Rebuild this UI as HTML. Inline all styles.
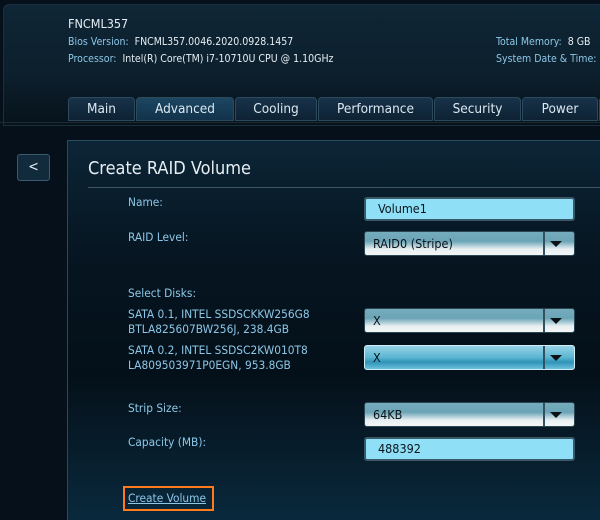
<!DOCTYPE html><html><head><style>
html,body{margin:0;width:600px;height:520px;overflow:hidden}
body{background:#06101a;font-family:"DejaVu Sans Condensed","DejaVu Sans","Liberation Sans",sans-serif;position:relative}
.hdr{position:absolute;left:3px;top:4px;width:600px;height:120px;border-radius:6px 0 0 0;border:1px solid #1a2f3e;background:linear-gradient(#0f2636,#0c1f2c 60%,#07121a);}
.t{position:absolute;white-space:nowrap}
.lb{color:#8cc7e8;font-size:10.5px}
.p{font-size:11.8px}
.tab{position:absolute;top:97px;height:24px;border:1px solid #2c4a5c;border-radius:4px 4px 0 0;background:linear-gradient(#17324a,#0e2233);color:#dbe8f0;font-size:13.5px;text-align:center;line-height:23px;box-sizing:border-box}
.tab.a{background:linear-gradient(#1c4662,#12334b)}
.panel{position:absolute;left:67px;top:140px;width:540px;height:390px;border:1px solid #2a4a5e;box-sizing:border-box;background:linear-gradient(#0c2536 0%,#061521 30%,#041019 60%,#0a2a3e 100%)}
.back{position:absolute;left:17px;top:154px;width:33px;height:27px;border:1px solid #3a5a6e;border-radius:3px;background:#112a3c;color:#e6eef3;text-align:center;line-height:25px;font-size:14px;box-sizing:border-box}
.inp{position:absolute;left:364px;width:211px;height:24px;border:2px solid #3a5868;border-radius:3px;background:#8fe0f6;box-sizing:border-box;font-size:12.5px;color:#08141c;padding-left:12px;line-height:20px}
.dd{position:absolute;left:364px;width:211px;height:25px;border:1px solid #2c4654;border-radius:3px;box-sizing:border-box;background:linear-gradient(#75adbd 0%,#6aa4b6 40%,#e9f0f2 75%,#f2f5f6 100%);font-size:12.5px;color:#0a1218;padding-left:8px;line-height:23px}
.dd.s{border:1px solid #cfeef8;background:linear-gradient(#96d3e6,#5bb5d2 50%,#2f93b8 70%,#6cc0dc)}
.dd:after{content:"";position:absolute;left:178px;top:0;width:2px;height:100%;background:#33505e}
.dd i{position:absolute;right:12px;top:9px;border-left:6px solid transparent;border-right:6px solid transparent;border-top:6px solid #0a1218}
</style></head><body>
<div class="hdr"></div>
<div class="t" style="left:68px;top:16px;font-size:12.5px;color:#e6eef3">FNCML357</div>
<div class="t lb" style="left:68px;top:36px">Bios Version:&nbsp; <span style="color:#e6eef3">FNCML357.0046.2020.0928.1457</span></div>
<div class="t lb" style="left:68px;top:53px">Processor:&nbsp; <span style="color:#e6eef3">Intel(R) Core(TM) i7-10710U CPU @ 1.10GHz</span></div>
<div class="t lb" style="left:496px;top:36px">Total Memory:&nbsp; <span style="color:#e6eef3">8 GB</span></div>
<div class="t lb" style="left:496px;top:53px">System Date &amp; Time:</div>
<div style="position:absolute;left:0;top:122px;width:600px;height:1px;background:#1a2c38"></div>
<div class="tab" style="left:68px;width:67px">Main</div>
<div class="tab a" style="left:136px;width:98px">Advanced</div>
<div class="tab" style="left:235px;width:82px">Cooling</div>
<div class="tab" style="left:318px;width:115px">Performance</div>
<div class="tab" style="left:434px;width:87px">Security</div>
<div class="tab" style="left:522px;width:76px">Power</div>
<div class="tab" style="left:599px;width:20px"></div>
<div class="back">&lt;</div>
<div class="panel"></div>
<div class="t" style="left:88px;top:158px;color:#e6eef3;font-size:18px">Create RAID Volume</div>
<div style="position:absolute;left:88px;top:187px;width:512px;height:1px;background:#3a5666"></div>
<div class="t lb p" style="left:128px;top:195px">Name:</div>
<div class="inp" style="top:197px">Volume1</div>
<div class="t lb p" style="left:128px;top:230px">RAID Level:</div>
<div class="dd" style="top:231px">RAID0 (Stripe)<i></i></div>
<div class="t lb p" style="left:128px;top:286px">Select Disks:</div>
<div class="t lb p" style="left:128px;top:307px;line-height:15px">SATA 0.1, INTEL SSDSCKKW256G8<br>BTLA825607BW256J, 238.4GB</div>
<div class="dd" style="top:308px">X<i></i></div>
<div class="t lb p" style="left:128px;top:343px;line-height:15px">SATA 0.2, INTEL SSDSC2KW010T8<br>LA809503971P0EGN, 953.8GB</div>
<div class="dd s" style="top:345px">X<i></i></div>
<div class="t lb p" style="left:128px;top:401px">Strip Size:</div>
<div class="dd" style="top:402px">64KB<i></i></div>
<div class="t lb p" style="left:128px;top:435px">Capacity (MB):</div>
<div class="inp" style="top:437px">488392</div>
<div style="position:absolute;left:123px;top:486px;width:91px;height:25px;border:2px solid #ff7a1a;box-sizing:border-box"></div>
<div class="t lb p" style="left:128px;top:491px;text-decoration:underline">Create Volume</div>
</body></html>
